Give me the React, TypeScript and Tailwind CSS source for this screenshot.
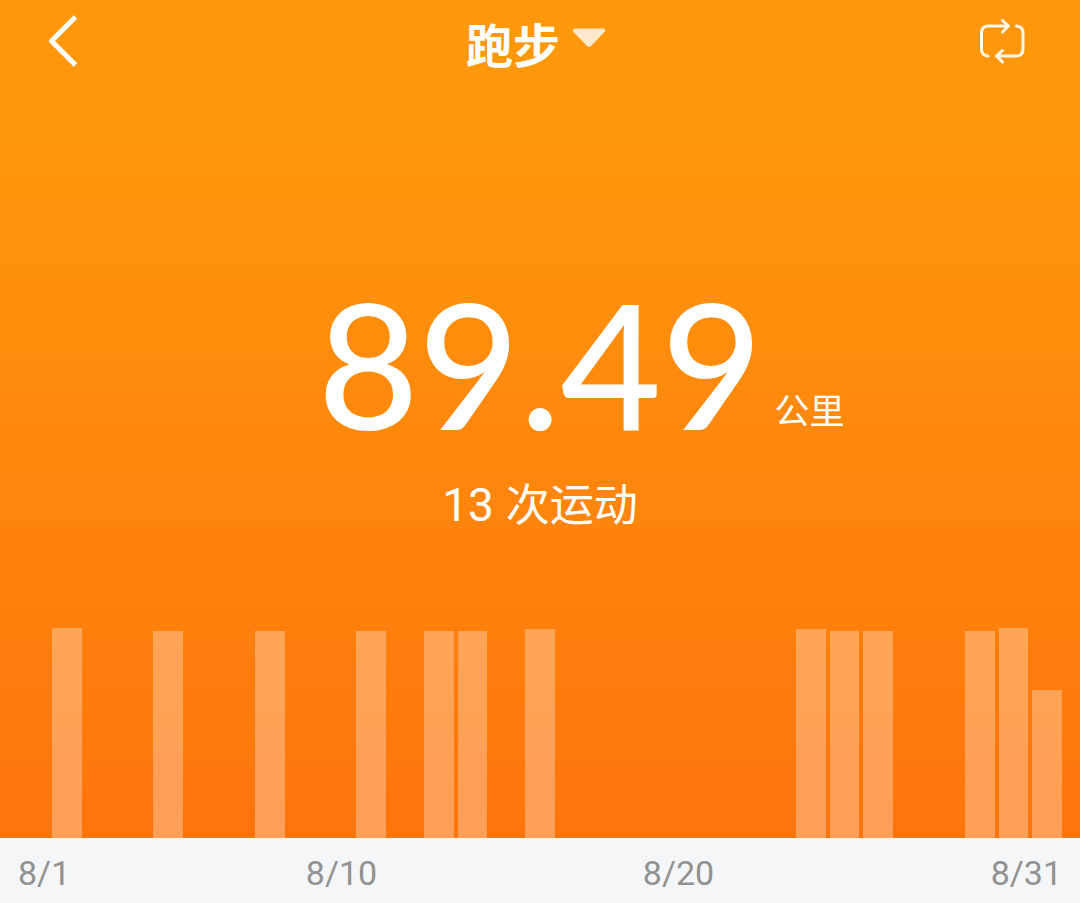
const DAYS_IN_MONTH = 31;

const runs: Record<number, number> = {
  2: 210,
  5: 207,
  8: 207,
  11: 207,
  13: 207,
  14: 207,
  16: 209,
  24: 209,
  25: 207,
  26: 207,
  29: 207,
  30: 210,
  31: 148,
};

function Header() {
  return (
    <header className="grid h-20 grid-cols-[1fr_auto_1fr] items-center px-12">
      <button type="button" aria-label="返回" className="justify-self-start">
        <svg width="30" height="54" viewBox="0 0 30 54" fill="none" stroke="white" strokeWidth="5" strokeLinejoin="round">
          <path d="M27.5 4 L3.5 28 L27.5 52" />
        </svg>
      </button>
      <button type="button" className="flex items-center gap-3 pr-2 pb-1">
        <h1 className="pt-2 text-[47px] leading-none font-bold">跑步</h1>
        <svg width="34" height="20" viewBox="0 0 34 20" fill="#ffe8cc">
          <path d="M2.5 0.5 H31.5 Q34.5 1.5 32.5 4 L19 18 Q17 19.8 15 18 L1.5 4 Q-0.5 1.5 2.5 0.5 Z" />
        </svg>
      </button>
      <button type="button" aria-label="切换" className="justify-self-end pr-1">
        <svg
          width="50"
          height="48"
          viewBox="0 0 50 48"
          fill="none"
          stroke="#fff8e8"
          strokeWidth="3"
          strokeLinecap="round"
          strokeLinejoin="round"
        >
          <path d="M10 40 H9.5 Q3.500 39 3.500 33 V17 Q3.500 10 10.500 10 H30" />
          <path d="M24.500 4.500 L30.500 10 L24.500 16" />
          <path d="M38.500 10 Q45 10.500 45 17 V33 Q45 40 38 40 H19" />
          <path d="M24.500 34.500 L18.500 40 L24.500 46" />
        </svg>
      </button>
    </header>
  );
}

function Summary() {
  return (
    <section className="flex grow flex-col items-center pt-[196px] pb-20">
      <div className="grid w-full grid-cols-[1fr_auto_1fr] items-end gap-3">
        <p className="col-start-2 font-['Lato'] text-[174px] leading-none font-medium">89.49</p>
        <span className="pb-6 text-[35px] leading-none">公里</span>
      </div>
      <p className="mt-[30px] flex items-baseline gap-3 text-[44px] leading-none">
        <span className="font-['Roboto'] text-[46px] leading-none">13</span>
        次运动
      </p>
    </section>
  );
}

function Chart() {
  const days = Array.from({ length: DAYS_IN_MONTH }, (_, i) => i + 1);
  return (
    <div className="flex h-[210px] items-end gap-1 px-[18px]">
      {days.map((day) => (
        <div key={day} className="flex-1 bg-white/30" style={{ height: runs[day] ?? 0 }} />
      ))}
    </div>
  );
}

function Axis() {
  return (
    <div className="grid h-[65px] grid-cols-[155fr_337fr_337fr_215fr] items-center bg-[#f5f6f8] px-[18px] pt-1 font-['Roboto'] text-[34px] leading-none text-[#929292]">
      <span>8/1</span>
      <span className="text-center">8/10</span>
      <span className="text-center">8/20</span>
      <span className="text-right">8/31</span>
    </div>
  );
}

export default function App() {
  return (
    <main className="flex min-h-screen flex-col font-['Noto_Sans_CJK_SC',sans-serif]">
      <div className="flex grow flex-col bg-linear-to-b from-[#ff970b] from-15% to-[#ff740d] text-white">
        <Header />
        <Summary />
        <Chart />
      </div>
      <Axis />
    </main>
  );
}
